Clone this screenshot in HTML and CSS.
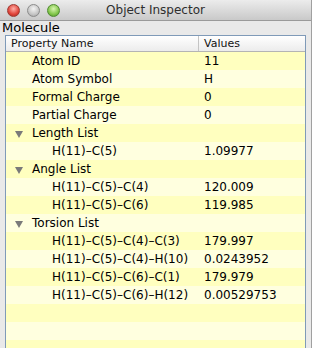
FILE: index.html
```html
<!DOCTYPE html>
<html lang="en">
<head>
  <meta charset="UTF-8" />
  <title>Object Inspector</title>
  <link rel="stylesheet" href="styles.css">
</head>
<body>
  <div class="window">
    <div class="titlebar">
      <div class="lights">
        <span class="light red"></span>
        <span class="light gray"></span>
        <span class="light green"></span>
      </div>
      <div class="title">Object Inspector</div>
    </div>
    <div class="section">Molecule</div>
    <div class="table">
      <div class="head">
        <div class="col-name">Property Name</div>
        <div class="col-value">Values</div>
      </div>
      <div class="row"><div class="col-name lvl1">Atom ID</div><div class="col-value">11</div></div>
      <div class="row"><div class="col-name lvl1">Atom Symbol</div><div class="col-value">H</div></div>
      <div class="row"><div class="col-name lvl1">Formal Charge</div><div class="col-value">0</div></div>
      <div class="row"><div class="col-name lvl1">Partial Charge</div><div class="col-value">0</div></div>
      <div class="row"><div class="col-name lvl1"><span class="arrow"></span>Length List</div><div class="col-value"></div></div>
      <div class="row"><div class="col-name lvl2">H(11)–C(5)</div><div class="col-value">1.09977</div></div>
      <div class="row"><div class="col-name lvl1"><span class="arrow"></span>Angle List</div><div class="col-value"></div></div>
      <div class="row"><div class="col-name lvl2">H(11)–C(5)–C(4)</div><div class="col-value">120.009</div></div>
      <div class="row"><div class="col-name lvl2">H(11)–C(5)–C(6)</div><div class="col-value">119.985</div></div>
      <div class="row"><div class="col-name lvl1"><span class="arrow"></span>Torsion List</div><div class="col-value"></div></div>
      <div class="row"><div class="col-name lvl2">H(11)–C(5)–C(4)–C(3)</div><div class="col-value">179.997</div></div>
      <div class="row"><div class="col-name lvl2">H(11)–C(5)–C(4)–H(10)</div><div class="col-value">0.0243952</div></div>
      <div class="row"><div class="col-name lvl2">H(11)–C(5)–C(6)–C(1)</div><div class="col-value">179.979</div></div>
      <div class="row"><div class="col-name lvl2">H(11)–C(5)–C(6)–H(12)</div><div class="col-value">0.00529753</div></div>
      <div class="row"></div>
      <div class="row"></div>
      <div class="row"></div>
      <div class="row"></div>
    </div>
  </div>
</body>
</html>
```

FILE: styles.css
```css
body {
  margin: 0;
  font-family: 'DejaVu Sans', sans-serif;
  background: #fff;
}

.window {
  width: 312px;
  height: 348px;
  display: flex;
  flex-direction: column;
  background: #e9e9e9;
  overflow: hidden;
  border-right: 1px solid #a0a0a0;
  box-sizing: border-box;
}

.titlebar {
  height: 21px;
  flex: none;
  display: flex;
  align-items: center;
  position: relative;
  background: linear-gradient(to bottom, #ececec, #c9c9c9);
  border-bottom: 1px solid #9a9a9a;
  box-sizing: border-box;
}

.lights {
  display: flex;
  gap: 7px;
  padding-left: 7px;
}

.light {
  width: 13px;
  height: 13px;
  border-radius: 50%;
  box-sizing: border-box;
}

.red {
  background: radial-gradient(circle at 50% 35%, #ffb0a8, #e0443a 60%, #a02820);
  border: 1px solid #9e3a32;
}

.gray {
  background: radial-gradient(circle at 50% 35%, #f4f4f4, #c6c6c6 60%, #9c9c9c);
  border: 1px solid #8c8c8c;
}

.green {
  background: radial-gradient(circle at 50% 35%, #d8f5b0, #82c64a 60%, #4c8e28);
  border: 1px solid #4f8a30;
}

.title {
  position: absolute;
  left: 0;
  right: 0;
  text-align: center;
  font-size: 12px;
  color: #2e2e2e;
  pointer-events: none;
}

.section {
  height: 14px;
  flex: none;
  font-size: 13px;
  line-height: 13px;
  padding-left: 2px;
  color: #000;
}

.table {
  flex: 1;
  margin: 0 5px 0 5px;
  border: 1px solid #7f9ab8;
  border-bottom: none;
  background: #ffffdf;
  overflow: hidden;
}

.head {
  height: 16px;
  display: flex;
  font-size: 11px;
  line-height: 15px;
  color: #111;
  background: linear-gradient(to bottom, #ffffff, #ececec);
  border-bottom: 1px solid #b4b4b4;
  box-sizing: border-box;
}

.head .col-name {
  padding-left: 5px;
  border-right: 1px solid #c4c4c4;
}

.head .col-value {
  padding-left: 5px;
}

.row {
  height: 18px;
  display: flex;
  font-size: 12px;
  line-height: 18px;
  color: #000;
}

.row:nth-of-type(odd) {
  background: #ffffdf;
}

.row:nth-of-type(even) {
  background: #ffffbf;
}

.col-name {
  width: 193px;
  flex: none;
  box-sizing: border-box;
  white-space: nowrap;
  position: relative;
}

.col-value {
  padding-left: 5px;
  white-space: nowrap;
}

.lvl1 {
  padding-left: 26px;
}

.lvl2 {
  padding-left: 46px;
}

.arrow {
  position: absolute;
  left: 9px;
  top: 7px;
  width: 0;
  height: 0;
  border-left: 4px solid transparent;
  border-right: 4px solid transparent;
  border-top: 7px solid #7a7a7a;
}
```
